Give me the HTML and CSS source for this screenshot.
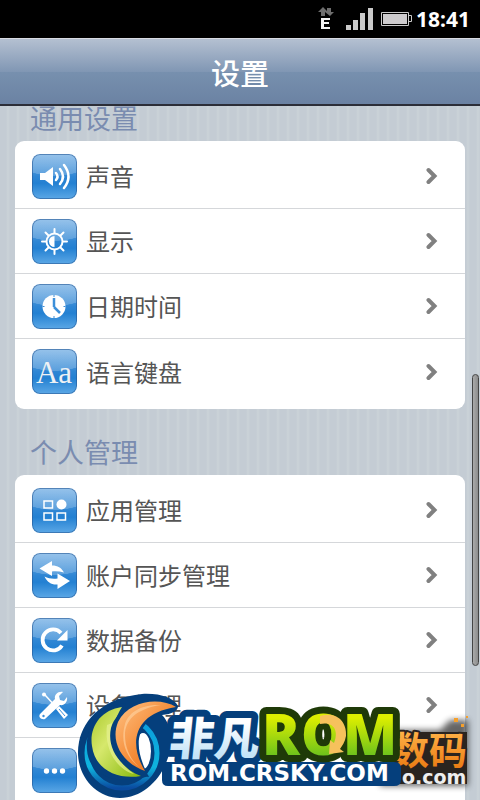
FILE: index.html
```html
<!DOCTYPE html>
<html lang="zh-CN">
<head>
    <meta charset="UTF-8">
    <meta name="viewport" content="width=device-width, initial-scale=1.0">
    <title>设置</title>
    <link rel="stylesheet" href="styles.css">
</head>
<body>
<div class="status-bar">
    <svg class="net" width="16" height="24" viewBox="0 0 16 24">
        <path d="M5 0l5 5H7v4H3V5H0zM9 1h4v4h3l-4 4-5-4h2z" fill="#6e6e6e"/>
        <path d="M3 11h9v2H6v2h5v2H6v3h6v2H3z" fill="#f2f2f2"/>
    </svg>
    <svg class="signal" width="28" height="22" viewBox="0 0 28 22">
        <path d="M0 17h5v5H0zM7 12h5v10H7zM14 5h5v17h-5zM22 0h5v22h-5z" fill="#cacaca"/>
    </svg>
    <svg class="battery" width="31" height="16" viewBox="0 0 31 16">
        <path d="M.5 1.5h27v13H.5zM27.500 4.500h3v6h-3" fill="none" stroke="#cacaca"/>
        <path d="M2 3h24v10H2z" fill="#cdcbcd"/>
    </svg>
    <span class="clock">18:41</span>
</div>
<header class="title-bar">
    <h1>设置</h1>
</header>
<main class="content">
    <div class="list">
        <h2>通用设置</h2>
        <ul class="card">
            <li><a href="#sound">
                <svg class="icon" viewBox="0 0 45 45">
                    <path d="M8 19h5l8-6v19l-8-6H8z" fill="#fff"/>
                    <path d="M24 19q3 3.500 0 7M28 15q6 7.500 0 15M32 11q9 11.500 0 23" fill="none" stroke="#fff" stroke-width="2.500" stroke-linecap="round"/>
                </svg>
                <span>声音</span>
                <svg class="arrow" viewBox="0 0 12 18"><path d="M2.500 3l6 6-6 6"/></svg>
            </a></li>
            <li><a href="#display">
                <svg class="icon" viewBox="0 0 45 45">
                    <circle cx="22.500" cy="22.500" r="8" fill="none" stroke="#fff" stroke-width="2"/>
                    <path d="M22.500 17a5.500 5.500 0 0 0 0 11z" fill="#fff"/>
                    <path d="M22.500 14V10M22.500 31v4M14 22.500h-4M31 22.500h4M16.500 16.500l-3-3M28.500 16.500l3-3M16.500 28.500l-3 3M28.500 28.500l3 3" stroke="#fff" stroke-width="2" stroke-linecap="round"/>
                </svg>
                <span>显示</span>
                <svg class="arrow" viewBox="0 0 12 18"><path d="M2.500 3l6 6-6 6"/></svg>
            </a></li>
            <li><a href="#date">
                <svg class="icon" viewBox="0 0 45 45">
                    <circle cx="22" cy="22.500" r="11.500" fill="#fff"/>
                    <path d="M22 14v9M22 23l6 6" stroke="#3c8fd9" stroke-width="2.500"/>
                    <path d="M22 11v2M22 32v2M10.500 22.500h2M31.500 22.500h2" stroke="#3c8fd9" stroke-width="1"/>
                </svg>
                <span>日期时间</span>
                <svg class="arrow" viewBox="0 0 12 18"><path d="M2.500 3l6 6-6 6"/></svg>
            </a></li>
            <li><a href="#language">
                <svg class="icon" viewBox="0 0 45 45">
                    <text class="icon-text" x="22" y="34">Aa</text>
                </svg>
                <span>语言键盘</span>
                <svg class="arrow" viewBox="0 0 12 18"><path d="M2.500 3l6 6-6 6"/></svg>
            </a></li>
        </ul>

        <h2>个人管理</h2>
        <ul class="card">
            <li><a href="#apps">
                <svg class="icon" viewBox="0 0 45 45">
                    <path d="M12 13h8.500v7H12zM12 25h8.500v7H12zM25 25h8.500v7H25z" fill="none" stroke="#fff" stroke-width="1.500"/>
                    <circle cx="29.500" cy="16.500" r="5" fill="#fff"/>
                </svg>
                <span>应用管理</span>
                <svg class="arrow" viewBox="0 0 12 18"><path d="M2.500 3l6 6-6 6"/></svg>
            </a></li>
            <li><a href="#accounts">
                <svg class="icon" viewBox="0 0 45 45">
                    <path d="M7.500 15.500L20 8v4.500c6 0 9 2 12 7-4-1-8-1.500-12-1V23z" fill="#fff"/>
                    <path d="M38 28l-12.500 8v-4.500c-6 .5-10-2-13-8 4 2 8 2.500 13 2v-5z" fill="#fff"/>
                </svg>
                <span>账户同步管理</span>
                <svg class="arrow" viewBox="0 0 12 18"><path d="M2.500 3l6 6-6 6"/></svg>
            </a></li>
            <li><a href="#backup">
                <svg class="icon" viewBox="0 0 45 45">
                    <path d="M30 27.500A10.500 10.500 0 1 1 29 15" fill="none" stroke="#fff" stroke-width="3.800"/>
                    <path d="M35.500 12v10.500H25z" fill="#fff"/>
                </svg>
                <span>数据备份</span>
                <svg class="arrow" viewBox="0 0 12 18"><path d="M2.500 3l6 6-6 6"/></svg>
            </a></li>
            <li><a href="#device">
                <svg class="icon" viewBox="0 0 45 45">
                    <path d="M13 12l12 13" stroke="#fff" stroke-width="1.500"/>
                    <circle cx="12" cy="11.500" r="2" fill="#fff"/>
                    <path d="M24 26l3-3 9 9-4 4z" fill="#fff"/>
                    <path d="M27 26l6 7" stroke="#3c8fd9" stroke-width="1"/>
                    <path d="M8 31l15-15c-1-4 3-8 8-7l-4 4 1 4 4 1 3-4c1 5-3 9-7 8L13 36c-4 1-7-2-5-5z" fill="#fff"/>
                    <circle cx="11.500" cy="33" r="1.200" fill="#3c8fd9"/>
                </svg>
                <span>设备管理</span>
                <svg class="arrow" viewBox="0 0 12 18"><path d="M2.500 3l6 6-6 6"/></svg>
            </a></li>
            <li><a href="#more" aria-label="更多">
                <svg class="icon" viewBox="0 0 45 45">
                    <circle cx="14.500" cy="23" r="2.700" fill="#fff"/>
                    <circle cx="22.500" cy="23" r="2.700" fill="#fff"/>
                    <circle cx="30.500" cy="23" r="2.700" fill="#fff"/>
                </svg>
            </a></li>
        </ul>
    </div>
    <div class="scrollbar"></div>
</main>

<!-- site stamps over the bottom of the list -->
<svg class="stamp" width="410" height="120" viewBox="0 0 410 120">
    <defs>
        <linearGradient id="rom" x1="0" y1="0" x2="0" y2="1">
            <stop offset="0.300" stop-color="#dcee00"/>
            <stop offset="0.800" stop-color="#6cc21c"/>
        </linearGradient>
        <linearGradient id="ice" x1="0" y1="0" x2="0" y2="1">
            <stop offset="0.300" stop-color="#fff"/>
            <stop offset="0.800" stop-color="#c4e4f8"/>
        </linearGradient>
        <linearGradient id="amber" x1="0" y1="0" x2="0" y2="1">
            <stop offset="0.200" stop-color="#ffb347"/>
            <stop offset="0.900" stop-color="#ea7a12"/>
        </linearGradient>
        <linearGradient id="green" x1="0" y1="0" x2="1" y2="1">
            <stop offset="0" stop-color="#a9c92a"/>
            <stop offset="0.400" stop-color="#d6e86c"/>
            <stop offset="1" stop-color="#86b80c"/>
        </linearGradient>
        <linearGradient id="orange" x1="0" y1="0" x2="1" y2="1">
            <stop offset="0" stop-color="#ffc284"/>
            <stop offset="0.500" stop-color="#f58f3c"/>
            <stop offset="1" stop-color="#e2640c"/>
        </linearGradient>
        <linearGradient id="ring" x1="0" y1="0" x2="0" y2="1">
            <stop offset="0" stop-color="#0a9bdc"/>
            <stop offset="0.700" stop-color="#0fb4de"/>
            <stop offset="1" stop-color="#0a4ba0"/>
        </linearGradient>
        <filter id="soft" x="-20%" y="-20%" width="140%" height="140%">
            <feGaussianBlur stdDeviation="3"/>
        </filter>
    </defs>

    <path class="shade" d="M310 50h60l10-10h18v66h-88z" filter="url(#soft)"/>
    <path d="M320 52h77v52h-77z" fill="#2a241f"/>
    <text class="digit" x="321" y="84">数码</text>
    <text class="digit-url" x="332" y="104">o.com</text>
    <path d="M384 38h4v4h-4zM391 44h3v3h-3zM396 36h2v2h-2z" fill="#f5a02c"/>

    <path d="M9 62C14 38 34 18 72 14c18-1 32 4 36 12 0 5-6 8-16 9 10 10 12 30 4 48-8 20-26 35-46 35C24 118 3 92 9 62z" fill="#053f7c"/>
    <circle cx="52" cy="73" r="35" fill="none" stroke="url(#ring)" stroke-width="5"/>
    <ellipse cx="73" cy="71" rx="8" ry="18" fill="#fff"/>
    <path d="M56 23C30 26 15 45 17 70c2 26 30 36 62 26C52 88 36 60 56 23z" fill="#053f7c"/>
    <path d="M52 27C30 30 19 48 22 66c3 24 26 34 49 30C44 86 33 57 52 27z" fill="url(#green)"/>
    <path d="M37 45c-3 22 8 44 27 49-16-11-25-28-22-51z" fill="#e5f190" opacity="0.700"/>
    <path d="M108 27C88 12 50 20 41 48c-5 22 12 44 38 49-16-30-18-58 29-70z" fill="#053f7c"/>
    <path d="M106 27C90 17 59 20 48 42c-8 20 4 41 27 49C59 65 62 34 106 27z" fill="url(#orange)"/>
    <path d="M55 44c3-10 14-20 36-19-26 4-36 16-36 30 0 14 6 25 15 33-14-11-20-26-15-44z" fill="#ffd3a2" opacity="0.600"/>

    <path d="M92 82h232q7 0 7 6v12q0 6-7 6H98q-6 0-6-6z" fill="#053f7c"/>
    <text class="brand" x="98" y="75" transform="skewX(-6)" transform-origin="98 75">非凡</text>
    <g class="rom">
        <text x="192" y="75">R</text>
        <text x="231" y="75">O</text>
        <text x="273" y="75">M</text>
    </g>
    <path d="M250 36c18-5 27 7 26 20-1 6-4 10-6 13l4 3-15 2 1-14 4 3c5-12 0-22-14-19z" fill="#f6c15c"/>
    <text class="brand-url" x="100" y="101">ROM.CRSKY.COM</text>
</svg>
</body>
</html>
```
FILE: styles.css
```css
* {
    box-sizing: border-box;
}

body {
    margin: 0;
    height: 100vh;
    display: flex;
    flex-direction: column;
    position: relative;
    overflow: hidden;
    background-color: #c5cdd6;
    font-family: "Noto Sans CJK SC", sans-serif;
}

/* Status bar */
.status-bar {
    height: 38px;
    flex: none;
    display: flex;
    align-items: center;
    justify-content: flex-end;
    padding-right: 10px;
    background-color: #000;
}

.signal {
    margin-left: 12px;
}

.battery {
    margin: 0 4px 0 7px;
}

.clock {
    color: #fff;
    font-family: "Noto Sans", sans-serif;
    font-size: 21px;
    font-weight: 700;
    line-height: 38px;
}

/* Title */
.title-bar {
    height: 68px;
    flex: none;
    border-top: 1px solid #d8dbe2;
    border-bottom: 2px solid #2c2e38;
    background: linear-gradient(#b4c0d1, #8197b4 50%, #7790ae 51%, #6b82a3);
}

h1 {
    margin: 0;
    color: #fff;
    font-size: 29px;
    font-weight: 500;
    line-height: 66px;
    text-align: center;
}

/* List */
.content {
    flex: 1;
    min-height: 0;
    position: relative;
    overflow: hidden;
    background: repeating-linear-gradient(90deg, #c4ccd4 0, #c4ccd4 6px, #cbd3d8 8px, #c4ccd4 10px);
}

/* scrolled down a little, the first heading is cut by the title bar */
.list {
    margin-top: -31px;
    padding: 0 15px;
}

h2 {
    margin: 0;
    padding: 20px 0 0 15px;
    color: #7a8cb0;
    font-size: 27px;
    font-weight: 400;
    line-height: 46px;
}

.card {
    margin: 0;
    padding: 3px 0 5px;
    list-style: none;
    background-color: #fff;
    border-radius: 9px;
}

.card li {
    height: 65px;
    border-bottom: 1px solid #d5d7da;
}

.card li:last-child {
    border-bottom: none;
}

.card a {
    height: 100%;
    display: flex;
    align-items: center;
    padding: 0 27px 0 17px;
    color: #555;
    font-size: 24px;
    line-height: 34px;
    text-decoration: none;
}

.card span {
    flex: 1;
    margin-left: 9px;
}

.icon {
    width: 45px;
    height: 45px;
    border-radius: 8px;
    box-shadow: inset 0 0 0 1px rgba(40, 90, 150, 0.6);
    background:
        radial-gradient(ellipse 42px 22px at 50% 0, rgba(255, 255, 255, 0.2) 98%, transparent),
        linear-gradient(#7db4e6, #2f86d4 50%, #2380d2 65%, #5ca8e6);
}

.icon-text {
    fill: #eef1f4;
    font-family: "Liberation Serif", serif;
    font-size: 31px;
    text-anchor: middle;
}

.arrow {
    width: 12px;
    height: 18px;
}

.arrow path {
    fill: none;
    stroke: #808080;
    stroke-width: 4;
    stroke-linecap: round;
}

.scrollbar {
    position: absolute;
    top: 268px;
    right: 1px;
    width: 7px;
    height: 292px;
    border: 1px solid #444;
    border-radius: 4px;
    background: linear-gradient(90deg, #aaa, #8c8c8c);
}

/* Stamps */
.stamp {
    position: absolute;
    right: 0;
    bottom: 0;
    pointer-events: none;
}

.shade {
    fill: #000;
    opacity: 0.6;
}

.stamp text {
    font-weight: 700;
    paint-order: stroke;
    stroke-linejoin: round;
}

.digit {
    fill: url(#amber);
    stroke: #2a241f;
    stroke-width: 4px;
    font-size: 38px;
}

.digit-url {
    fill: #eee;
    font-family: "DejaVu Sans", sans-serif;
    font-size: 19px;
}

.stamp .brand {
    fill: url(#ice);
    stroke: #053f7c;
    stroke-width: 14px;
    font-size: 45px;
    font-weight: 900;
}

.stamp .rom text {
    fill: url(#rom);
    stroke: #1f3a08;
    stroke-width: 14px;
    font-family: "Open Sans", sans-serif;
    font-size: 56px;
    font-weight: 800;
}

.brand-url {
    fill: #fff;
    font-family: "DejaVu Sans", sans-serif;
    font-size: 23px;
}
```
